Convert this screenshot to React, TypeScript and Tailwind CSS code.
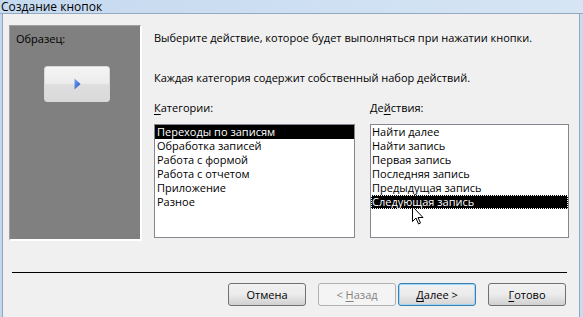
import React from "react";

const categories = [
  "Переходы по записям",
  "Обработка записей",
  "Работа с формой",
  "Работа с отчетом",
  "Приложение",
  "Разное",
];

const actions = [
  "Найти далее",
  "Найти запись",
  "Первая запись",
  "Последняя запись",
  "Предыдущая запись",
  "Следующая запись",
];

function WinButton({ children, variant }: { children: React.ReactNode; variant?: "default" | "disabled" }) {
  const base = "w-[78px] h-[23px] rounded-[3px] flex items-center justify-center text-[11px] leading-none";
  if (variant === "disabled")
    return <div className={`${base} border border-[#adb2b5] bg-[#f4f4f4] text-[#838383]`}>{children}</div>;
  if (variant === "default")
    return (
      <div className={`${base} border border-[#3c7fb1] bg-gradient-to-b from-[#f2f2f2] via-[#ebebeb] to-[#d5d5d5] shadow-[inset_0_0_0_1px_#9fd7f5] text-black`}>
        {children}
      </div>
    );
  return (
    <div className={`${base} border border-[#707070] bg-gradient-to-b from-[#f2f2f2] via-[#ebebeb] to-[#d0d0d0] text-black`}>
      {children}
    </div>
  );
}

export default function App() {
  return (
    <div className="w-[583px] h-[317px] overflow-hidden flex flex-col bg-[#c9dbee] font-['Open_Sans',sans-serif] text-black">
      {/* title bar */}
      <div className="h-[14px] shrink-0 bg-gradient-to-r from-[#c5d9ef] via-[#cddff2] to-[#d6e5f4] border-b border-[#95a9bf] flex items-center">
        <span className="pl-[1px] text-[12px] leading-[13px] text-black">Создание кнопок</span>
      </div>

      <div className="flex flex-1 min-h-0">
        <div className="w-[2px] bg-[#c3d6ec] border-r border-[#8fa6be] box-content" />
        <div className="flex-1 bg-[#f0f0f0] flex flex-col pl-[6px] pt-[11px]">
          <div className="flex">
            {/* sample panel */}
            <div className="w-[133px] h-[216px] bg-[#808080] border-t border-l border-[#a0a0a0] border-r-2 border-b-2 border-r-[#ffffff] border-b-[#ffffff] flex flex-col">
              <div className="pl-[6px] pt-[5px] text-[11px] leading-[16px]">Образец:</div>
              <div className="ml-[34px] mt-[19px] w-[66px] h-[36px] rounded-[3px] border border-[#d8d8d8] bg-[linear-gradient(to_bottom,#f4f4f4_0%,#ececec_48%,#dedede_52%,#dadada_100%)] flex items-center justify-center">
                <svg width="7" height="12" viewBox="0 0 7 12">
                  <defs>
                    <linearGradient id="tri" x1="0" y1="0" x2="1" y2="1">
                      <stop offset="0" stopColor="#7aa6f0" />
                      <stop offset="1" stopColor="#1d4fc2" />
                    </linearGradient>
                  </defs>
                  <path d="M0.5 0.5 L6.5 6 L0.5 11.5 Z" fill="url(#tri)" />
                </svg>
              </div>
            </div>

            {/* right side */}
            <div className="ml-[12px] w-[415px] flex flex-col text-[11px]">
              <div className="mt-[5px] leading-[16px]">Выберите действие, которое будет выполняться при нажатии кнопки.</div>
              <div className="mt-[24px] leading-[16px]">Каждая категория содержит собственный набор действий.</div>
              <div className="flex mt-[14px] leading-[16px]">
                <div className="w-[216px]">
                  <span className="underline underline-offset-2">К</span>атегории:
                </div>
                <div>
                  Де<span className="underline underline-offset-2">й</span>ствия:
                </div>
              </div>
              <div className="flex gap-[15px] mt-[8px]">
                <div className="w-[201px] h-[114px] border border-[#828790] bg-white">
                  {categories.map((c, i) => (
                    <div
                      key={c}
                      className={`h-[14px] leading-[14px] pl-[2px] text-[11px] ${i === 0 ? "bg-black text-white" : ""}`}
                    >
                      {c}
                    </div>
                  ))}
                </div>
                <div className="relative w-[199px] h-[114px] border border-[#828790] bg-white">
                  {actions.map((a, i) => (
                    <div
                      key={a}
                      className={`h-[14px] leading-[14px] pl-[1px] text-[11px] ${i === 5 ? "bg-black text-white outline outline-1 outline-dotted outline-white -outline-offset-1" : ""}`}
                    >
                      {a}
                    </div>
                  ))}
                  {/* mouse pointer */}
                  <svg className="absolute left-[41px] top-[81px]" width="12" height="19" viewBox="0 0 12 19">
                    <path
                      d="M0.5 0.5 L0.5 15.5 L4 12 L6.5 18 L8.5 17 L6 11.5 L11 11.5 Z"
                      fill="white"
                      stroke="black"
                      strokeWidth="1"
                      strokeLinejoin="miter"
                    />
                  </svg>
                </div>
              </div>
            </div>
          </div>

          {/* separator */}
          <div className="mt-[31px] ml-[3px] w-[555px] h-px bg-black" />

          {/* buttons */}
          <div className="flex mt-[10px] pl-[219px] gap-[12px]">
            <WinButton>Отмена</WinButton>
            <div className="mr-[-9px]">
              <WinButton variant="disabled">
                &lt;&nbsp;<span className="underline underline-offset-2">Н</span>азад
              </WinButton>
            </div>
            <div className="ml-[-1px]">
              <WinButton variant="default">
                <span className="underline underline-offset-2">Д</span>алее&nbsp;&gt;
              </WinButton>
            </div>
            <WinButton>
              <span className="underline underline-offset-2">Г</span>отово
            </WinButton>
          </div>
        </div>
        <div className="w-[1px] bg-[#8fa6be]" />
        <div className="w-[3px] bg-[#c9dbee]" />
      </div>
    </div>
  );
}
